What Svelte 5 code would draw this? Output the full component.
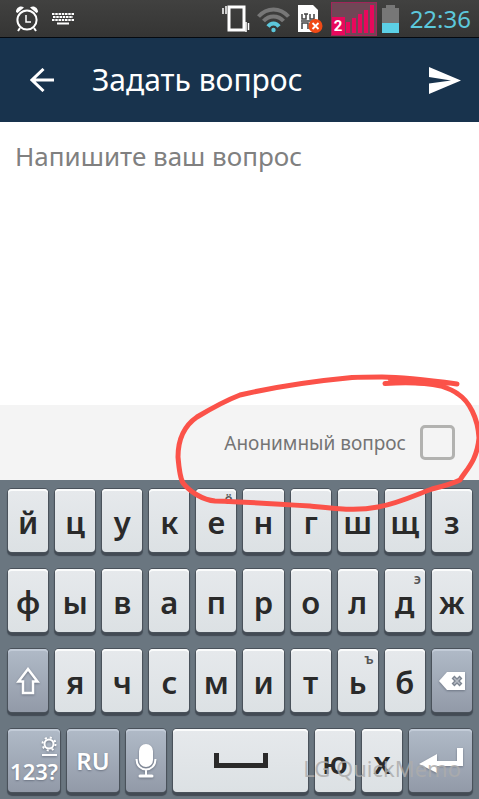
<script lang="ts">
  type Key = { label: string; hint?: string };

  let question = $state('');
  let anonymous = $state(false);

  const toKeys = (letters: string, hints: Record<string, string> = {}): Key[] =>
    [...letters].map((label) => ({ label, hint: hints[label] }));

  const topRow = toKeys('йцукенгшщз', { е: 'ё' });
  const homeRow = toKeys('фывапролдж', { д: 'э' });
  const lowerRow = toKeys('ячсмитьб', { ь: 'ъ' });
  const lastRow = toKeys('юх');

  function type(letter: string) {
    question += letter;
  }

  function erase() {
    question = question.slice(0, -1);
  }
</script>

{#snippet letterKey(key: Key)}
  <button class="key" type="button" onclick={() => type(key.label)}>
    <span class="letter">{key.label}</span>
    {#if key.hint}<span class="hint">{key.hint}</span>{/if}
  </button>
{/snippet}

<div class="screen">
  <div class="status">
    <svg class="alarm" width="24" height="26" viewBox="0 0 24 26" fill="none" stroke="#fff">
      <circle cx="12" cy="14" r="9.6" stroke-width="2" />
      <path d="M11 9v7h5" stroke-width="1.5" />
      <path d="M5 22l-2 3M19 22l2 3" stroke-width="2" />
      <path d="M1 6C1 2 5-1 9 1.500L2.500 7zM23 6c0-4-4-7-8-4.500L21.500 7z" fill="#fff" stroke="none" />
    </svg>
    <svg class="ime" width="22" height="13" viewBox="0 0 22 13" fill="none" stroke="#fff" stroke-width="2">
      <path d="M0 2h22M0 8h22" stroke-dasharray="2.500 .75" />
      <path d="M1 5h20" stroke-dasharray="2.500 .75" />
      <path d="M5 11.500h12" />
    </svg>

    <div class="indicators">
      <svg width="28" height="28" viewBox="0 0 28 28" fill="none" stroke="#fff">
        <rect x="7" y="2" width="15" height="23" stroke-width="3" />
        <path d="M1 3v6M26.500 18v7" stroke-width="1.500" />
        <path d="M4 1v8M24 17v10" stroke-width="1.500" />
      </svg>
      <svg width="33" height="28" viewBox="0 0 33 28" fill="none" stroke-width="4">
        <path d="M1.500 11.500C10 2 23 2 31.500 11.500" stroke="#777" />
        <path d="M6.500 16C12 10 21 10 26.500 16" stroke="#777" />
        <path d="M11 21.500c3-4 8-4 11 0" stroke="#5cc8dc" />
        <circle cx="16.500" cy="25" r="2.200" fill="#5cc8dc" />
      </svg>
      <svg class="sim" width="25" height="28" viewBox="0 0 25 28">
        <path d="M0 0h15l5 5v22H0z" fill="#fff" />
        <path d="M4 9v5h4V9m4 0v5h4V9M6 9h4M4 24v-6h6v6M3 16h14" fill="none" stroke="#444" stroke-width="1.500" />
        <circle cx="17.500" cy="21" r="7" fill="#f04a16" />
        <path d="M14.500 18l6 6M20.500 18l-6 6" stroke="#fff" stroke-width="1.800" />
      </svg>
      <div class="signal">
        <span>2</span>
        <svg width="46" height="34" viewBox="0 0 46 34">
          <path d="M15 20h4v11h-4zM21 16h4v15h-4zM27 12h4v19h-4zM33 8h4v23h-4zM39 3h4v28h-4z" fill="#e8085c" />
        </svg>
      </div>
      <svg width="17" height="28" viewBox="0 0 17 28">
        <path d="M0 3h4V0h9v3h4v15H0z" fill="#777" />
        <path d="M0 18h17v10H0z" fill="#5cd0e6" />
      </svg>
      <time>22:36</time>
    </div>
  </div>

  <header>
    <button class="icon" type="button" aria-label="Назад">
      <svg width="24" height="24" viewBox="0 0 24 24" fill="none" stroke="#fff" stroke-width="3">
        <path d="M24 12H2M13.500 1L2 12l11.500 11" />
      </svg>
    </button>
    <h1>Задать вопрос</h1>
    <button class="icon" type="button" aria-label="Отправить">
      <svg width="32" height="27" viewBox="0 0 32 27">
        <path d="M0 0l32 13.500L0 27V16.500l22-3L0 10z" fill="#fff" />
      </svg>
    </button>
  </header>

  <textarea bind:value={question} placeholder="Напишите ваш вопрос" aria-label="Вопрос"></textarea>

  <div class="options">
    <label for="anonymous">Анонимный вопрос</label>
    <input id="anonymous" type="checkbox" bind:checked={anonymous} />
    <svg class="marker" width="319" height="150" viewBox="0 0 319 150">
      <path
        d="M297 19C275 16 245 12 222 12C212 12 202 12 192 12.500C155 16 110 23 80 30C62 37 47 46 37 52C21 63 18 78 18 92C19 104 20 113 23 118C30 127 43 135 55 136C90 137 120 139 150 141C180 144 197 146 218 142C240 138 260 128 272 124C284 121 292 119 300 115C306 105 317 96 319 73C318 53 309 36 298 29C293 25 287 23 281 21C262 17 245 17 225 18.500"
      />
      <path class="fill" d="M228 12l66 7-14 2-50-3z" />
    </svg>
  </div>

  <div class="keyboard">
    <div class="row">
      {#each topRow as key (key.label)}{@render letterKey(key)}{/each}
    </div>
    <div class="row">
      {#each homeRow as key (key.label)}{@render letterKey(key)}{/each}
    </div>
    <div class="row">
      <button class="key dark" type="button" aria-label="Shift">
        <svg width="24" height="28" viewBox="0 0 24 28" fill="none" stroke="#fff" stroke-width="2.500">
          <path d="M12 2L2.500 14.500H7V26h10V14.500h4.500z" />
        </svg>
      </button>
      {#each lowerRow as key (key.label)}{@render letterKey(key)}{/each}
      <button class="key dark" type="button" aria-label="Стереть" onclick={erase}>
        <svg width="28" height="20" viewBox="0 0 28 20">
          <path d="M1 10l8-9h18v18H9z" fill="#fff" />
          <path d="M15 6l8 8M23 6l-8 8" stroke="#7d8591" stroke-width="4" />
          <path d="M16 7l6 6M22 7l-6 6" stroke="#b5bac3" stroke-width="1.500" />
        </svg>
      </button>
    </div>
    <div class="row">
      <button class="key dark wide symbols" type="button">
        <svg width="16" height="21" viewBox="0 0 16 21" fill="none" stroke="#fff">
          <circle cx="8" cy="8" r="4.500" stroke-width="2" />
          <circle cx="8" cy="8" r="6.500" stroke-width="2" stroke-dasharray="2.100 3" />
          <path d="M1 19h15" stroke-width="2" />
        </svg>
        <span>123?</span>
      </button>
      <button class="key dark wide" type="button">RU</button>
      <button class="key dark" type="button" aria-label="Голосовой ввод">
        <svg width="22" height="34" viewBox="0 0 22 34" fill="none" stroke="#fff" stroke-width="2">
          <rect x="5" y="1" width="12" height="21" rx="6" fill="#fff" />
          <path d="M1.500 15c0 14 19 14 19 0M11 26v5" />
          <path d="M5 32h12" stroke-width="3" stroke-linecap="round" />
        </svg>
      </button>
      <button class="key space" type="button" aria-label="Пробел" onclick={() => type(' ')}>
        <svg width="54" height="15" viewBox="0 0 54 15" fill="none" stroke="#2a2a2a" stroke-width="5">
          <path d="M2.500 0v12.500h49V0" />
        </svg>
      </button>
      {#each lastRow as key (key.label)}{@render letterKey(key)}{/each}
      <button class="key dark enter" type="button" aria-label="Ввод" onclick={() => type('\n')}>
        <svg width="46" height="27" viewBox="0 0 46 27">
          <path d="M1 17L19 7v7h20V1h6v18H19v7z" fill="#fff" />
        </svg>
      </button>
    </div>
    <div class="watermark">LG QuickMemo</div>
  </div>
</div>

<style>
  :global(body) {
    margin: 0;
  }

  .screen {
    min-height: 100vh;
    display: flex;
    flex-direction: column;
    overflow: hidden;
    font-family: "Noto Sans", "Open Sans", sans-serif;
    background: #fff;
  }

  button {
    font-family: inherit;
    border: 0;
    padding: 0;
    cursor: pointer;
  }

  svg {
    display: block;
    flex: none;
  }

  .status {
    display: flex;
    align-items: center;
    height: 37px;
    padding: 0 8px 0 15px;
    background: linear-gradient(#414140, #353534);
    border-bottom: 1px solid #050a10;
  }

  .alarm {
    margin-right: 13px;
  }

  .indicators {
    display: flex;
    align-items: center;
    margin-left: auto;
    gap: 7px;
  }

  .sim {
    margin: 0 1px;
  }

  .signal {
    position: relative;
    margin-right: -2px;
    background: #704656;
    box-shadow: inset 0 0 0 1px #a02659;
  }

  .signal span {
    position: absolute;
    left: 1px;
    bottom: 1px;
    width: 13px;
    background: #e8085c;
    color: #fff;
    font: bold 15px/18px Roboto, sans-serif;
    text-align: center;
  }

  time {
    margin-left: 4px;
    color: #5cc8dc;
    font-size: 24px;
    line-height: 36px;
  }

  header {
    display: flex;
    align-items: center;
    height: 84px;
    padding: 0 18px 0 30px;
    background: #18334d;
  }

  h1 {
    flex: 1;
    margin: 0 0 0 38px;
    color: #fff;
    font-size: 30px;
    font-weight: 400;
    line-height: 40px;
  }

  .icon {
    background: none;
  }

  textarea {
    flex: 1;
    box-sizing: border-box;
    width: 100%;
    min-height: 120px;
    padding: 16px 15px;
    border: 0;
    outline: 0;
    resize: none;
    color: #333;
    font-family: inherit;
    font-size: 26px;
    line-height: 36px;
  }

  textarea::placeholder {
    color: #808080;
    opacity: 1;
  }

  .options {
    position: relative;
    display: flex;
    align-items: center;
    justify-content: flex-end;
    gap: 14px;
    height: 75px;
    padding-right: 24px;
    background: #f4f4f4;
  }

  .options label {
    color: #747474;
    font-size: 19px;
    line-height: 28px;
  }

  .options input {
    appearance: none;
    box-sizing: border-box;
    width: 35px;
    height: 35px;
    margin: 0;
    border: 3px solid #b2b2b0;
    border-radius: 5px;
  }

  .options input:checked {
    background: #18334d;
  }

  .marker {
    position: absolute;
    z-index: 2;
    right: 0;
    top: -40px;
    fill: none;
    stroke: #fb5249;
    stroke-width: 5;
    stroke-linecap: round;
    stroke-linejoin: round;
    pointer-events: none;
  }

  .marker .fill {
    fill: #fb5249;
    stroke-width: 1;
  }

  .keyboard {
    position: relative;
    display: flex;
    flex-direction: column;
    gap: 17px;
    padding: 9px 7px 7px 8px;
    background: #6a7680;
  }

  .row {
    display: flex;
    gap: 7px;
  }

  .key {
    position: relative;
    display: flex;
    flex: 40 1 0;
    align-items: center;
    justify-content: center;
    min-width: 0;
    height: 63px;
    border-radius: 4px;
    background: linear-gradient(#e6e9ec, #dce1e4);
    box-shadow: inset 0 2px #fbfcfc, 0 0 0 1px #4a525b, 0 3px 1px 1px #434b54;
    color: #2a2a2a;
  }

  .letter {
    padding-top: 2px;
    font-size: 31px;
    font-weight: 600;
    line-height: 32px;
  }

  .hint {
    position: absolute;
    top: 3px;
    right: 4px;
    color: #555;
    font-size: 14px;
    font-weight: 600;
    line-height: 14px;
  }

  .dark {
    background: linear-gradient(#b0bac7, #929aa8);
    box-shadow: inset 0 2px #c3ccd8, 0 0 0 1px #4a525b, 0 3px 1px 1px #434b54;
    color: #fff;
    font-size: 24px;
    font-weight: 600;
    text-shadow: 0 1px 2px #6d7584;
  }

  .dark svg {
    filter: drop-shadow(0 1px 1px #6d7584);
  }

  .wide {
    flex-grow: 52;
  }

  .space {
    flex-grow: 135;
  }

  .enter {
    flex-grow: 63;
  }

  .symbols {
    flex-direction: column;
    font-size: 22px;
    line-height: 28px;
  }

  .symbols svg {
    align-self: flex-end;
    margin-right: 3px;
  }

  .watermark {
    position: absolute;
    right: 18px;
    bottom: 17px;
    color: rgba(172, 172, 172, 0.85);
    font-size: 22px;
    line-height: 28px;
    pointer-events: none;
  }
</style>
